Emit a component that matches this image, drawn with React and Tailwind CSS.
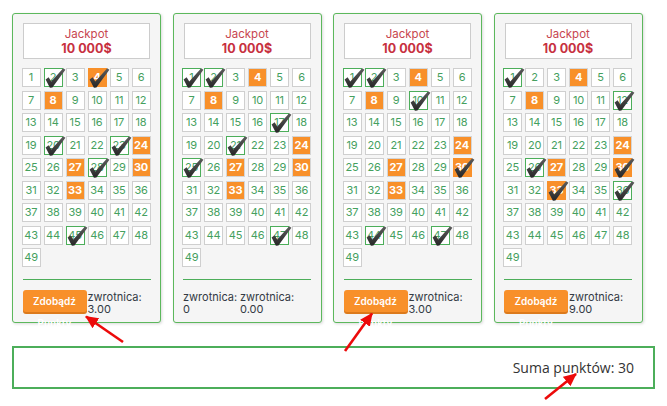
import React from "react";

const cards = [
  { checked: [2, 4, 20, 23, 28, 45], footer: "button", value: "3.00" },
  { checked: [1, 2, 17, 21, 25, 47], footer: "double" },
  { checked: [1, 2, 10, 30, 44, 47], footer: "button", value: "3.00" },
  { checked: [1, 12, 26, 30, 33, 36], footer: "button", value: "9.00" },
];
const orange = [4, 8, 24, 27, 30, 33];

function Check() {
  return (
    <svg
      className="absolute left-0 top-[-1px] w-[21px] h-[21px] pointer-events-none"
      viewBox="0 0 21 21"
    >
      <defs>
        <linearGradient id="cg" x1="0" y1="0" x2="0" y2="1">
          <stop offset="0" stopColor="#5c5c5c" />
          <stop offset="1" stopColor="#262626" />
        </linearGradient>
      </defs>
      <path
        d="M0.6 11.6 L3.6 9.2 L6.3 13.6 L18.2 0.3 L20.4 1.8 L7.4 19.6 L4.9 19.8 Z"
        fill="url(#cg)"
      />
    </svg>
  );
}

function Cell({ n, checked }) {
  const isOrange = orange.includes(n);
  const base =
    "relative w-[19px] h-[19px] border flex items-center justify-center text-[11px] leading-none tracking-[-0.2px]";
  let cls;
  if (isOrange) {
    cls = base + " bg-[#f8902a] text-white font-bold " + (checked ? "border-[#f8902a]" : "border-[#d5d5d5]");
  } else {
    cls = base + " bg-white text-[#45a05e] " + (checked ? "border-[#4cae5a]" : "border-[#cfcfcf]");
  }
  return (
    <div className={cls}>
      <span>{n}</span>
      {checked && <Check />}
    </div>
  );
}

function Card({ card }) {
  const nums = Array.from({ length: 49 }, (_, i) => i + 1);
  return (
    <div className="w-[149px] h-[310px] border border-[#5cb85c] rounded-[3px] bg-[#f5f5f5] shadow-[1px_1px_3px_rgba(0,0,0,0.15)] px-[8.5px] pt-[9px] flex flex-col">
      <div className="mx-[1.5px] h-[36px] border border-[#cccccc] bg-white flex flex-col items-center justify-center">
        <div className="text-[11.5px] leading-[14px] text-[#c8464f]">Jackpot</div>
        <div className="text-[12.5px] leading-[15px] font-bold text-[#c7313f]">10 000$</div>
      </div>
      <div className="mt-[9px] flex flex-wrap gap-x-[3px] gap-y-[3.5px] w-[129px]">
        {nums.map((n) => (
          <Cell key={n} n={n} checked={card.checked.includes(n)} />
        ))}
      </div>
      <div className="mt-[12px] mx-[1px] border-t border-[#4cae5a]" />
      {card.footer === "button" ? (
        <div className="mt-[9.5px] flex items-start">
          <div className="ml-[1px] w-[64px] h-[22px] shrink-0 bg-[#f8902a] rounded-[3px] shadow-[0_2px_0_#dc7a1c] text-white text-[10px] font-semibold leading-[22px] text-center">
            Zdobądź Punkty
          </div>
          <div className="ml-[1px] mt-[1px] text-[11px] leading-[12.5px] text-[#333a44]">
            zwrotnica:
            <br />
            {card.value}
          </div>
        </div>
      ) : (
        <div className="mt-[10.5px] flex items-start text-[11px] leading-[12.5px] text-[#333a44]">
          <div className="ml-[1px] w-[57px]">
            zwrotnica:
            <br />0
          </div>
          <div>
            zwrotnica:
            <br />
            0.00
          </div>
        </div>
      )}
    </div>
  );
}

export default function App() {
  return (
    <div className="relative w-[667px] h-[406px] bg-white font-['Inter',sans-serif] overflow-hidden">
      <div className="flex gap-[11.5px] pl-3 pt-[13px]">
        {cards.map((c, i) => (
          <Card key={i} card={c} />
        ))}
      </div>
      <div className="mx-3 mt-[23px] h-[43px] border-2 border-[#4cae5a] flex items-center justify-end pr-[19px] font-['Open_Sans',sans-serif] text-[14px] text-[#333]">
        Suma punktów: 30
      </div>
      <svg className="absolute left-0 top-0 w-[667px] h-[406px] pointer-events-none" viewBox="0 0 667 406">
        <defs>
          <marker
            id="ah"
            markerUnits="userSpaceOnUse"
            markerWidth="14"
            markerHeight="12"
            refX="12"
            refY="6"
            orient="auto"
          >
            <path d="M0 0 L13 6 L0 12 Z" fill="#ec0a0a" />
          </marker>
        </defs>
        <line x1="123" y1="342" x2="86" y2="316.5" stroke="#ec0a0a" strokeWidth="2.6" markerEnd="url(#ah)" />
        <line x1="345" y1="351" x2="372" y2="313.5" stroke="#ec0a0a" strokeWidth="2.6" markerEnd="url(#ah)" />
        <line x1="545" y1="399" x2="576" y2="374" stroke="#ec0a0a" strokeWidth="2.6" markerEnd="url(#ah)" />
      </svg>
    </div>
  );
}
